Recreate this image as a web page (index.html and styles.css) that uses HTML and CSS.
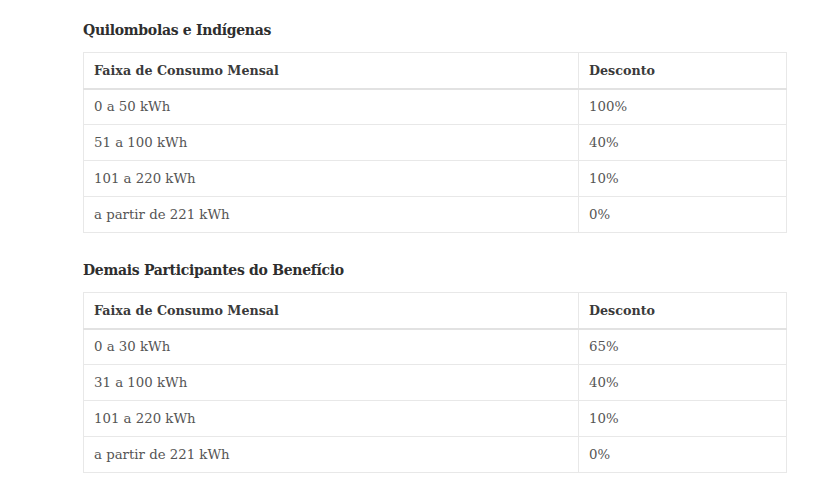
FILE: index.html
```html
<!DOCTYPE html>
<html lang="pt">
<head>
<meta charset="utf-8">
<link rel="stylesheet" href="styles.css">
</head>
<body>
<div class="page">
  <section class="block">
    <h3 class="title">Quilombolas e Indígenas</h3>
    <table class="tbl">
      <thead>
        <tr><th class="c1">Faixa de Consumo Mensal</th><th>Desconto</th></tr>
      </thead>
      <tbody>
        <tr><td>0 a 50 kWh</td><td>100%</td></tr>
        <tr><td>51 a 100 kWh</td><td>40%</td></tr>
        <tr><td>101 a 220 kWh</td><td>10%</td></tr>
        <tr><td>a partir de 221 kWh</td><td>0%</td></tr>
      </tbody>
    </table>
  </section>
  <section class="block second">
    <h3 class="title">Demais Participantes do Benefício</h3>
    <table class="tbl">
      <thead>
        <tr><th class="c1">Faixa de Consumo Mensal</th><th>Desconto</th></tr>
      </thead>
      <tbody>
        <tr><td>0 a 30 kWh</td><td>65%</td></tr>
        <tr><td>31 a 100 kWh</td><td>40%</td></tr>
        <tr><td>101 a 220 kWh</td><td>10%</td></tr>
        <tr><td>a partir de 221 kWh</td><td>0%</td></tr>
      </tbody>
    </table>
  </section>
</div>
</body>
</html>
```
FILE: styles.css
```css
html, body {
  margin: 0;
  padding: 0;
  background: #ffffff;
}
body {
  font-family: "DejaVu Serif", "Liberation Serif", serif;
  color: #555555;
}
.page {
  width: 704px;
  margin-left: 83px;
  padding-top: 19px;
}
.title {
  margin: 0 0 11px 0;
  font-size: 14px;
  line-height: 22px;
  font-weight: 600;
  color: #2e2e2e;
  letter-spacing: -0.3px;
}
.second {
  margin-top: 26px;
}
.tbl {
  width: 704px;
  border-collapse: collapse;
  font-size: 13.3px;
}
.tbl th, .tbl td {
  border: 1px solid #e8e8e8;
  height: 36px;
  padding: 0 10px;
  text-align: left;
  box-sizing: border-box;
}
.tbl th {
  font-size: 12.7px;
  font-weight: 600;
  color: #3a3a3a;
  border-bottom: 2px solid #e2e2e2;
}
.tbl td {
  color: #555555;
}
.tbl .c1 {
  width: 495px;
}
```
